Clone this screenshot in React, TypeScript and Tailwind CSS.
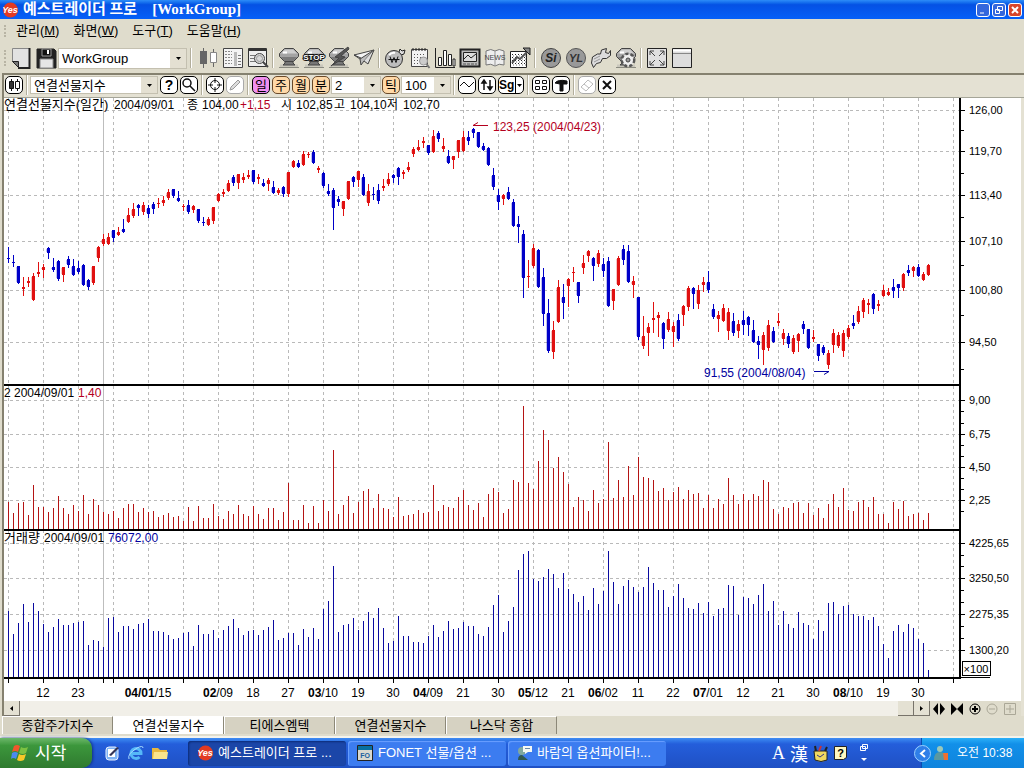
import React from "react";

// [up, high, body top, body bottom, low]
const candles = [
  [0, 247, 258, 259, 262], [0, 255, 262, 263, 266], [0, 266, 266, 283, 283], [1, 277, 287, 289, 295], [1, 277, 281, 283, 286],
  [1, 273, 276, 300, 300], [1, 262, 272, 274, 276], [1, 264, 267, 270, 277], [0, 247, 248, 253, 258], [0, 258, 267, 270, 271],
  [0, 260, 261, 279, 280], [1, 267, 267, 275, 281], [0, 256, 259, 265, 267], [0, 259, 266, 275, 275], [0, 261, 268, 272, 273],
  [0, 264, 265, 285, 285], [0, 279, 280, 287, 289], [1, 266, 266, 283, 284], [1, 246, 247, 258, 261], [1, 234, 239, 244, 245],
  [1, 233, 237, 244, 244], [0, 230, 230, 238, 241], [1, 227, 232, 235, 235], [0, 219, 229, 232, 232], [1, 208, 215, 222, 222],
  [1, 203, 209, 216, 217], [0, 204, 205, 208, 215], [1, 202, 205, 212, 214], [0, 205, 208, 214, 217], [0, 202, 204, 209, 213],
  [1, 198, 203, 204, 207], [1, 196, 200, 203, 205], [1, 189, 192, 198, 199], [0, 189, 189, 196, 197], [0, 191, 198, 201, 201],
  [1, 204, 206, 207, 210], [0, 200, 205, 212, 213], [1, 205, 206, 210, 212], [0, 209, 209, 221, 222], [0, 217, 222, 223, 225],
  [1, 217, 219, 225, 225], [1, 207, 207, 221, 223], [1, 193, 194, 201, 201], [1, 189, 192, 194, 196], [1, 180, 183, 191, 191],
  [0, 175, 177, 183, 185], [1, 174, 174, 183, 188], [1, 173, 177, 180, 182], [1, 170, 175, 177, 178], [0, 170, 170, 182, 183],
  [1, 174, 177, 179, 183], [0, 179, 183, 186, 186], [1, 178, 180, 184, 190], [0, 181, 187, 193, 193], [1, 188, 190, 193, 194],
  [0, 186, 187, 194, 196], [1, 172, 172, 194, 196], [1, 160, 161, 167, 167], [0, 160, 163, 167, 167], [1, 151, 154, 165, 165],
  [1, 152, 154, 155, 157], [0, 150, 152, 163, 163], [1, 166, 168, 170, 172], [0, 172, 173, 186, 187], [0, 184, 191, 194, 195],
  [0, 188, 190, 208, 229], [0, 196, 199, 202, 205], [1, 201, 201, 209, 215], [1, 181, 181, 199, 199], [0, 176, 177, 182, 186],
  [1, 171, 171, 180, 186], [0, 174, 177, 195, 195], [1, 184, 191, 203, 205], [0, 187, 194, 195, 199], [0, 184, 190, 201, 203],
  [1, 179, 186, 188, 190], [1, 173, 179, 184, 185], [0, 174, 175, 178, 182], [0, 167, 168, 177, 184], [1, 170, 172, 174, 178],
  [1, 162, 167, 170, 171], [1, 147, 149, 154, 156], [1, 140, 147, 150, 150], [1, 137, 141, 143, 147], [0, 145, 145, 153, 154],
  [1, 130, 136, 152, 152], [0, 131, 133, 139, 141], [1, 138, 146, 149, 151], [0, 150, 156, 163, 163], [1, 156, 156, 160, 168],
  [1, 140, 140, 152, 157], [1, 131, 137, 151, 151], [0, 131, 137, 141, 144], [0, 128, 129, 133, 137], [0, 132, 132, 147, 147],
  [0, 143, 146, 150, 150], [0, 147, 148, 165, 165], [0, 168, 175, 187, 189], [0, 189, 195, 202, 209], [1, 194, 195, 199, 204],
  [0, 187, 192, 199, 199], [0, 199, 202, 226, 226], [0, 216, 224, 227, 242], [0, 230, 234, 278, 297], [1, 260, 276, 277, 287],
  [1, 244, 248, 266, 267], [0, 249, 250, 287, 287], [0, 268, 277, 314, 325], [0, 299, 313, 351, 352], [1, 321, 330, 352, 358],
  [1, 280, 287, 322, 322], [0, 284, 297, 303, 318], [1, 278, 279, 286, 306], [1, 267, 272, 273, 281], [0, 282, 282, 296, 302],
  [1, 255, 263, 268, 273], [1, 250, 251, 256, 261], [0, 257, 258, 266, 280], [1, 250, 253, 264, 266], [0, 258, 264, 271, 276],
  [0, 257, 261, 306, 306], [1, 289, 289, 301, 309], [1, 256, 258, 285, 285], [0, 245, 249, 260, 264], [0, 245, 251, 282, 282],
  [1, 276, 281, 285, 297], [0, 297, 297, 337, 339], [1, 316, 336, 346, 348], [1, 323, 327, 333, 355], [1, 302, 318, 320, 332],
  [1, 312, 315, 318, 336], [0, 322, 323, 339, 348], [1, 312, 319, 330, 331], [1, 322, 326, 332, 346], [0, 314, 320, 339, 340],
  [1, 305, 306, 315, 325], [1, 286, 288, 307, 310], [0, 287, 288, 294, 308], [1, 285, 290, 304, 308], [1, 277, 282, 285, 291],
  [0, 271, 282, 290, 292], [0, 304, 309, 317, 318], [1, 311, 315, 319, 331], [1, 304, 308, 321, 321], [1, 308, 312, 331, 339],
  [0, 313, 321, 333, 335], [1, 320, 324, 331, 337], [0, 311, 320, 325, 334], [0, 316, 317, 325, 335], [0, 320, 330, 342, 342],
  [0, 336, 341, 345, 358], [1, 332, 335, 350, 364], [1, 320, 325, 348, 350], [0, 327, 331, 342, 342], [1, 313, 321, 323, 325],
  [1, 329, 333, 339, 344], [0, 333, 336, 344, 347], [1, 335, 338, 352, 353], [1, 333, 334, 341, 351], [0, 321, 324, 329, 333],
  [0, 329, 329, 348, 348], [1, 330, 337, 339, 341], [0, 344, 344, 356, 360], [0, 345, 347, 353, 354], [1, 350, 353, 365, 368],
  [1, 329, 333, 345, 352], [1, 332, 335, 346, 347], [1, 330, 333, 351, 356], [1, 325, 328, 337, 338], [0, 315, 323, 326, 328],
  [1, 306, 311, 322, 323], [1, 298, 300, 312, 317], [1, 299, 303, 305, 313], [0, 293, 294, 309, 313], [1, 300, 304, 306, 310],
  [1, 285, 290, 296, 296], [1, 288, 292, 295, 295], [0, 279, 287, 291, 297], [0, 284, 284, 288, 297], [1, 273, 274, 288, 290],
  [0, 265, 270, 273, 275], [1, 266, 267, 271, 276], [0, 264, 267, 276, 276], [1, 272, 274, 280, 280], [1, 264, 265, 275, 275],
];

const ranges = [
  28, 17, 27, 28, 15, 45, 23, 23, 18, 22, 34, 22, 16, 25, 19, 35, 16, 31, 25, 18, 16, 19, 12, 22, 26, 26, 18, 22, 18, 19,
  13, 15, 17, 13, 14, 9, 23, 9, 24, 12, 12, 26, 14, 11, 19, 16, 25, 16, 14, 24, 16, 11, 22, 22, 10, 18, 47, 10, 10, 25,
  7, 24, 7, 30, 19, 80, 16, 25, 34, 17, 28, 39, 41, 22, 36, 22, 21, 13, 33, 14, 15, 16, 20, 17, 18, 45, 19, 25, 23, 22,
  33, 40, 25, 20, 27, 13, 36, 42, 38, 17, 21, 50, 48, 124, 47, 41, 69, 100, 90, 62, 73, 58, 46, 23, 33, 30, 19, 40, 27, 31,
  88, 32, 50, 33, 64, 35, 73, 53, 52, 50, 39, 42, 30, 38, 43, 31, 40, 36, 37, 22, 35, 22, 31, 26, 52, 35, 26, 36, 30, 36,
  34, 50, 48, 21, 16, 23, 22, 27, 28, 17, 27, 15, 22, 12, 26, 36, 23, 42, 20, 19, 28, 30, 23, 33, 16, 16, 7, 28, 21, 29,
  14, 16, 17, 10, 17,
];

const volumes = [
  66, 43, 54, 73, 55, 74, 66, 53, 45, 50, 58, 52, 52, 54, 55, 56, 32, 37, 36, 30, 59, 60, 45, 51, 51, 48, 53, 54, 58, 46,
  46, 45, 42, 38, 39, 44, 45, 31, 52, 43, 43, 47, 39, 47, 51, 58, 49, 42, 46, 47, 42, 47, 50, 57, 37, 39, 44, 44, 32, 48,
  40, 49, 38, 68, 76, 111, 45, 52, 53, 59, 47, 56, 65, 59, 69, 49, 34, 36, 61, 41, 41, 35, 35, 34, 41, 52, 40, 46, 56, 48,
  49, 55, 51, 51, 43, 41, 50, 72, 82, 45, 56, 70, 107, 123, 126, 98, 96, 100, 108, 103, 89, 104, 88, 83, 75, 81, 67, 89, 73, 86,
  126, 95, 73, 91, 97, 90, 85, 90, 110, 94, 87, 87, 70, 81, 93, 79, 69, 68, 74, 64, 75, 61, 68, 69, 92, 91, 62, 80, 79, 73,
  82, 93, 66, 76, 52, 66, 53, 49, 65, 54, 52, 38, 57, 46, 74, 75, 63, 71, 72, 63, 61, 61, 57, 60, 51, 33, 19, 46, 52, 45,
  53, 49, 38, 34, 7,
];

const yLabels: [number, string][] = [
  [110, "126,00"], [151, "119,70"], [195, "113,40"], [241, "107,10"], [290, "100,80"], [342, "94,50"],
  [400, "9,00"], [434, "6,75"], [467, "4,50"], [500, "2,25"],
  [543, "4225,65"], [578, "3250,50"], [614, "2275,35"], [650, "1300,20"],
];
const minorTicks = [130, 173, 217, 265, 315, 369, 411, 423, 445, 456, 478, 489, 511, 555, 566, 590, 602, 626, 638];

// [bold month, rest], one per 35px column starting at the second one
const xLabels: [string, string][] = [
  ["", "12"], ["", "23"], ["", ""], ["04/01", "/15"], ["", ""], ["02", "/09"], ["", "18"], ["", "27"], ["03", "/10"],
  ["", "19"], ["", "30"], ["04", "/09"], ["", "21"], ["", "30"], ["05", "/12"], ["", "21"], ["06", "/02"], ["", "11"],
  ["", "22"], ["07", "/01"], ["", "12"], ["", "21"], ["", "30"], ["08", "/10"], ["", "19"], ["", "30"],
];
const columns = Array.from({ length: 28 }, (_, i) => 8 + i * 35);

function Chart() {
  return (
    <svg viewBox="4 98 1017 603" className="block w-full h-auto bg-white" role="img" aria-label="연결선물지수">
      <g shapeRendering="crispEdges">
        <g stroke="#b9b9b9" strokeDasharray="3 3">
          {columns.map((x) => (
            <line key={x} x1={x + 0.5} x2={x + 0.5} y1="98" y2="677" />
          ))}
          {yLabels.map(([y]) => (
            <line key={y} x1="4" x2="959" y1={y + 0.5} y2={y + 0.5} />
          ))}
        </g>
        <rect x="103" y="98" width="1" height="579" fill="#bdbdbd" />
        {candles.map(([up, high, top, bottom, low], i) => (
          <g key={i} fill={up ? "#e01010" : "#0000c8"}>
            <rect x={8 + i * 5} y={high} width="1" height={low - high + 1} />
            <rect x={7 + i * 5} y={top} width="3" height={bottom - top} />
            <rect x={6 + i * 5} y={top + 1} width="1" height={Math.max(bottom - top - 2, 0)} opacity="0.25" />
          </g>
        ))}
        {ranges.map((h, i) => (
          <rect key={i} x={8 + i * 5} y={530 - h} width="1" height={h} fill="#b41414" />
        ))}
        {volumes.map((h, i) => (
          <rect key={i} x={8 + i * 5} y={677 - h} width="1" height={h} fill="#0a0aa0" />
        ))}
        <rect x="4" y="384" width="956" height="2" />
        <rect x="4" y="529" width="956" height="2" />
        <rect x="4" y="677" width="957" height="2" />
        <rect x="959" y="98" width="2" height="581" />
        <rect x="961" y="677" width="29" height="1" />
        {yLabels.map(([y]) => (
          <rect key={y} x="961" y={y} width="4" height="1" />
        ))}
        {minorTicks.map((y) => (
          <rect key={y} x="961" y={y} width="3" height="1" />
        ))}
        {columns.map((x) => (
          <rect key={x} x={x} y="679" width="1" height="4" />
        ))}
        <rect x="103" y="679" width="1" height="4" />
        <rect x="962.5" y="661.5" width="28" height="14" fill="#fff" stroke="#000" />
      </g>
      <g fontSize="12">
        <text x="4" y="109" fontSize="13">연결선물지수(일간)</text>
        <text x="114" y="109">2004/09/01</text>
        <text x="187" y="109">종</text>
        <text x="202" y="109">104,00</text>
        <text x="240" y="109" fill="#b4001e">+1,15</text>
        <text x="281" y="109">시</text>
        <text x="296" y="109">102,85</text>
        <text x="334" y="109">고</text>
        <text x="350" y="109">104,10</text>
        <text x="387" y="109">저</text>
        <text x="403" y="109">102,70</text>
        <text x="4" y="397">2 2004/09/01</text>
        <text x="78" y="397" fill="#b4001e">1,40</text>
        <text x="4" y="542" fontSize="13">거래량</text>
        <text x="44" y="542">2004/09/01</text>
        <text x="108" y="542" fill="#0000a0">76072,00</text>
        <text x="493" y="131" fill="#b4001e">123,25 (2004/04/23)</text>
        <text x="704" y="377" fill="#0000a0">91,55 (2004/08/04)</text>
        <text x="976" y="673" fontSize="11" textAnchor="middle">×100</text>
      </g>
      <path d="M488 125.5H473M478 122.5L473 125.5" fill="none" stroke="#b4001e" />
      <path d="M814 371.5H829M829 371.5L824 374.5" fill="none" stroke="#0000a0" />
      <g>
        {yLabels.map(([y, label]) => (
          <text key={y} x="969" y={y + 4} fontSize="11">{label}</text>
        ))}
        {xLabels.map(([month, day], i) => (
          <text key={i} x={43 + i * 35} y="697" fontSize="12" textAnchor="middle">
            <tspan fontWeight="bold">{month}</tspan>{day}
          </text>
        ))}
      </g>
    </svg>
  );
}

function Combo({ label, value, className }: { label: string; value: string; className: string }) {
  return (
    <div className={"relative flex bg-white border border-[#c4c0b0] " + className}>
      <select aria-label={label} defaultValue={value} className="appearance-none bg-transparent w-full h-full pl-[3px] leading-none outline-none">
        <option>{value}</option>
      </select>
      <span className="pointer-events-none absolute right-0 inset-y-0 w-4 bg-[#e4e0d2] flex items-center justify-center">
        <svg width="5" height="3"><path d="M0 0h5L2.5 3z" /></svg>
      </span>
    </div>
  );
}

function Tool({ name, children }: { name: string; children: React.ReactNode }) {
  return (
    <button aria-label={name} title={name} className="w-[25px] h-6 flex items-center justify-center">
      <svg width="22" height="22" viewBox="0 0 22 22" fill="none" stroke="#222" className="overflow-visible">{children}</svg>
    </button>
  );
}

function Sep({ className = "mx-[2px]" }: { className?: string }) {
  return <span className={"w-[2px] h-5 border-l border-[#b2ae9c] border-r border-r-white " + className} />;
}

function Bell() {
  return (
    <>
      <path d="M2 17.500h18v3H2z" fill="#c9c7bc" stroke="none" />
      <path d="M1 20.500h20" stroke="#8a8a80" />
      <path d="M7 14h8v2l2 2H5l2-2z" fill="#777" stroke="#444" />
      <path d="M6.500 1.500h9l5 5v3l-5 5h-9l-5-5v-3z" fill="#a4a4a4" stroke="#444" />
      <path d="M7 2.500h8l4 4H3z" fill="#cfcfcf" stroke="none" />
      <path d="M3 10h16l-3.500 4h-9z" fill="#7a7a7a" stroke="none" />
      <path d="M5 5.500h4" stroke="#fff" strokeWidth="2" />
    </>
  );
}

function MainToolbar() {
  return (
    <div className="flex items-center h-[30px] pl-1">
      <span className="w-1 h-4 border-l-2 border-dotted border-[#b8b4a4]" />
      <Tool name="새 화면">
        <path d="M2.500 1.500h17v19h-11l-6-6z" fill="#e2e2e2" stroke="#888" />
        <path d="M19.500 1v20H8" stroke="#222" strokeWidth="2" />
        <path d="M2.500 14.500h6v6z" fill="#777" />
      </Tool>
      <Tool name="저장">
        <path d="M2 2h17l2 2v17H2z" fill="#222" />
        <path d="M7 2h9v7H7z" fill="#111" stroke="#999" />
        <path d="M13 3v4" stroke="#fff" strokeWidth="2" />
        <path d="M5 12h13v9H5z" fill="#e6e6e6" stroke="#888" />
      </Tool>
      <Combo label="작업그룹" value="WorkGroup" className="w-[129px] h-[21px] text-[13px]" />
      <Sep className="mx-[3px]" />
      <Tool name="차트">
        <path d="M6.500 1v20M16.500 2v18" stroke="#666" />
        <path d="M3 4h7v13H3z" fill="#666" stroke="none" />
        <path d="M13.500 5.500h6v10h-6z" fill="#fff" stroke="#888" />
      </Tool>
      <Tool name="현재가">
        <path d="M1.500 1.500h19v19h-19z" fill="#f4f4f4" stroke="#444" />
        <path d="M3 4.500h7M3 7.500h7M3 10.500h7M3 13.500h7M3 16.500h7" stroke="#888" strokeDasharray="2 1" />
        <path d="M12 5h3v14h-3z" fill="#bbb" stroke="none" />
        <path d="M16 8.500h3M16 11.500h3M16 14.500h3M16 17.500h3" stroke="#777" />
      </Tool>
      <Tool name="종목검색">
        <path d="M1.500 1.500h18v18h-18z" fill="#eee" stroke="#333" />
        <path d="M1 3h19" stroke="#333" strokeWidth="2" />
        <path d="M3 8.500h5M3 11.500h4M3 14.500h5" stroke="#777" />
        <circle cx="12.500" cy="11.500" r="5" fill="#d8d8d8" stroke="#444" />
        <circle cx="12.500" cy="11.500" r="3" stroke="#999" />
        <path d="M16 15l5 5" stroke="#444" strokeWidth="2" />
      </Tool>
      <Sep />
      <Tool name="알람"><Bell /></Tool>
      <Tool name="정지">
        <Bell />
        <text x="11" y="13" textAnchor="middle" fontSize="8" fontWeight="bold" fill="#fff" stroke="#111" strokeWidth="2" paintOrder="stroke">STOP</text>
      </Tool>
      <Tool name="알람 해제">
        <Bell />
        <path d="M20 0L7 10l4 1-8 8 14-9-4-1 8-7z" fill="#555" stroke="#444" />
      </Tool>
      <Tool name="주문">
        <path d="M1 8l20-5-10 11-3-3z" fill="#f4f4f4" stroke="#444" />
        <path d="M21 3L7 12l1 6 3-4z" fill="#bbb" stroke="#444" />
        <path d="M1 8l6 4" stroke="#444" />
        <path d="M11 14l4 3 6-14" fill="#ddd" stroke="#444" />
      </Tool>
      <Sep />
      <Tool name="계좌">
        <path d="M15 5l1-3 2 2 3-1-1 4-3 1" fill="#ddd" />
        <circle cx="10" cy="12" r="8.500" fill="#bdbdbd" stroke="#333" />
        <path d="M5 8q3-3 6-2" stroke="#fff" strokeWidth="2" />
        <path d="M6 9.500l2 6 2-5 2 5 2-6M4.500 12.500h11" stroke="#111" />
      </Tool>
      <Tool name="달력">
        <path d="M2.500 2.500h16v17h-16z" fill="#f2f2f2" stroke="#444" />
        <path d="M4 1v3M7 1v3M10 1v3M13 1v3M16 1v3" />
        <path d="M5 7.500h12M5 10.500h12M5 13.500h7M5 16.500h7" stroke="#555" strokeDasharray="1 2" strokeWidth="1" />
        <circle cx="14.500" cy="14" r="4" fill="#ccc" stroke="#999" />
        <path d="M17.500 17l3 4" stroke="#777" strokeWidth="2" />
      </Tool>
      <Tool name="막대차트">
        <path d="M1.500 1v19.500H21" />
        <path d="M4.500 10.500h3v8h-3zM9.500 3.500h3v15h-3zM14.500 7.500h3v11h-3zM19 12v7h2v-7z" fill="#fff" />
      </Tool>
      <Tool name="모니터">
        <path d="M1.500 2.500h19v17h-19z" fill="#bbb" strokeWidth="2" />
        <path d="M4.500 5.500h13v9h-13z" fill="#ddd" />
        <path d="M5 12l4-4 3 3 5-4" />
        <path d="M4 17h14" stroke="#555" strokeDasharray="3 1" />
      </Tool>
      <Tool name="뉴스">
        <path d="M2 4q5-3 9 0 4-3 9 0v14q-5-2-9 1-4-3-9-1z" fill="#eee" stroke="#777" />
        <path d="M11 4v15" stroke="#999" />
        <text x="11" y="13" textAnchor="middle" fontSize="7" fill="#444" stroke="none">NEWS</text>
      </Tool>
      <Tool name="추세">
        <path d="M1.500 4.500h16v16h-16z" fill="#fff" />
        <path d="M3 7.500h14M3 10.500h14M3 13.500h14M3 16.500h14" strokeDasharray="1 2" />
        <path d="M4 9h13M4 12h13M4 15h13M4 18h13" stroke="#777" strokeDasharray="1 2" />
        <path d="M3 16l5-6 3 2 8-8" stroke="#555" strokeWidth="2" />
        <path d="M14 1h7v7z" fill="#888" />
      </Tool>
      <Sep />
      <Tool name="시뮬레이션">
        <circle cx="11" cy="11" r="9.500" fill="#999" stroke="#444" />
        <text x="11" y="15" textAnchor="middle" fontSize="12" fontWeight="bold" fontStyle="italic" fill="#222" stroke="none">Si</text>
      </Tool>
      <Tool name="예스랭귀지">
        <circle cx="11" cy="11" r="9.500" fill="#999" stroke="#555" />
        <text x="11" y="15" textAnchor="middle" fontSize="11" fontWeight="bold" fontStyle="italic" fill="#333" stroke="none">YL</text>
      </Tool>
      <Tool name="도구">
        <path d="M1.500 16l1-6 5-3 3 0 1-4 5-1.500-1 4 3 1 2-3 0 5-4 3-4 0-2 4-4 1-3 4z" fill="#dcdcdc" stroke="#333" />
        <path d="M4 12l6-3M4 15l6-3" stroke="#999" />
      </Tool>
      <Tool name="설정">
        <Bell />
        <circle cx="13" cy="13" r="6" fill="#eee" stroke="#555" strokeDasharray="3 2" strokeWidth="3" />
        <circle cx="13" cy="13" r="5" fill="#eee" stroke="none" />
        <circle cx="13" cy="13" r="2" fill="#999" stroke="#444" />
      </Tool>
      <Sep />
      <Tool name="전체화면">
        <path d="M1.500 1.500h19v19h-19z" fill="#e0e0e0" />
        <path d="M4 8V4h4M4 4l5 5M14 4h4v4M18 4l-5 5M4 14v4h4M4 18l5-5M18 14v4h-4M18 18l-5-5" stroke="#444" />
      </Tool>
      <Tool name="창">
        <path d="M1.500 1.500h19v19h-19z" fill="#ddd" />
        <path d="M2 3.500h18" stroke="#fff" strokeWidth="2" />
        <path d="M2 6.500h18" stroke="#888" />
      </Tool>
    </div>
  );
}

function Key({ name, tone = "bg-white border-black", children }: { name: string; tone?: string; children: React.ReactNode }) {
  return (
    <button aria-label={name} title={name} className={"w-[18px] h-[18px] mx-px shrink-0 rounded-[5px] border flex items-center justify-center text-[13px] leading-none " + tone}>
      {children}
    </button>
  );
}

function Glyph({ d, stroke = "#111", fill = "none", width = 1 }: { d: string; stroke?: string; fill?: string; width?: number }) {
  return (
    <svg width="14" height="14" viewBox="0 0 14 14" fill={fill} stroke={stroke} strokeWidth={width} className="shrink-0">
      <path d={d} />
    </svg>
  );
}

function ChartToolbar() {
  return (
    <div className="flex items-center h-[22px] pb-[2px]">
      <Key name="차트 종류">
        <svg width="14" height="14" viewBox="0 0 14 14" stroke="#111" className="shrink-0">
          <path d="M4.500 1v12M10.500 1v12" />
          <path d="M2.500 3.500h4v7h-4z" fill="#333" />
          <path d="M8.500 3.500h4v7h-4z" fill="#fff" />
        </svg>
      </Key>
      <Sep />
      <Combo label="종목" value="연결선물지수" className="w-[128px] h-[18px] text-[13px]" />
      <span className="w-px" />
      <Key name="도움말"><b className="text-[14px]">?</b></Key>
      <Key name="검색"><Glyph d="M9 5a4 4 0 1 1-8 0 4 4 0 1 1 8 0M8 8l5 5" width={1.5} /></Key>
      <Sep />
      <Key name="십자선"><Glyph d="M11.500 7a4.500 4.500 0 1 1-9 0 4.500 4.500 0 1 1 9 0M7 0v5M7 9v5M0 7h5M9 7h5" /></Key>
      <Key name="그리기" tone="bg-white border-[#aaa]"><Glyph d="M2 12l1-3 7-7 2 2-7 7z" stroke="#999" fill="#ddd" /></Key>
      <Sep />
      <Key name="일" tone="bg-[#f090f0] border-black">일</Key>
      <Key name="주" tone="bg-[#ffd9a8] border-[#6a4a2a]">주</Key>
      <Key name="월" tone="bg-[#ffd9a8] border-[#6a4a2a]">월</Key>
      <Key name="분" tone="bg-[#ffd9a8] border-[#6a4a2a]">분</Key>
      <Combo label="분 단위" value="2" className="w-[50px] h-[18px] text-[13px]" />
      <Key name="틱" tone="bg-[#ffd9a8] border-[#6a4a2a]">틱</Key>
      <Combo label="틱 단위" value="100" className="w-[50px] h-[18px] text-[13px]" />
      <Sep />
      <Key name="지표"><Glyph d="M0 8l4-4 5 5 5-5" /></Key>
      <Key name="정렬"><Glyph d="M4 12V4M10 2v8M2 5l2-3 2 3zM8 9l2 3 2-3z" fill="#111" width={1.5} /></Key>
      <button aria-label="신호" className="flex h-[18px] w-[26px] mx-px rounded-[5px] border border-black bg-white items-center text-[12px] font-bold leading-none">
        <span>Sg</span>
        <span className="ml-px h-full border-l border-black flex items-center pl-px">
          <svg width="5" height="3"><path d="M0 0h5L2.500 3z" /></svg>
        </span>
      </button>
      <Sep />
      <Key name="분할"><Glyph d="M1.500 2.500h4v3h-4zM8.500 2.500h4v3h-4zM1.500 8.500h4v3h-4zM8.500 8.500h4v3h-4z" /></Key>
      <Key name="도구"><Glyph d="M1 5q3-4 12-2v3H9v7H6V6z" fill="#111" /></Key>
      <Sep />
      <Key name="지우기" tone="bg-white border-[#aaa]"><Glyph d="M8 2l5 4-7 7-5-4zM4 6l5 4" stroke="#bbb" /></Key>
      <Key name="닫기"><Glyph d="M3 3l8 8M11 3l-8 8" width={2} /></Key>
    </div>
  );
}

function YesLogo() {
  return (
    <svg width="17" height="16" viewBox="0 0 17 16" className="shrink-0">
      <circle cx="8.500" cy="8" r="7.500" fill="#e23a22" />
      <text x="8" y="11" textAnchor="middle" fontSize="9" fontWeight="bold" fontStyle="italic" fill="#fff">Yes</text>
    </svg>
  );
}

function WinButton({ name, red, d }: { name: string; red?: boolean; d: string }) {
  return (
    <button aria-label={name} className={"w-[14px] h-[14px] rounded-[3px] border border-white flex items-center justify-center " + (red ? "bg-[#d8452a]" : "bg-[#3467dc]")}>
      <svg width="10" height="10" fill="none" stroke="#fff" strokeWidth={red ? 2 : 1}><path d={d} /></svg>
    </button>
  );
}

const tabs = ["종합주가지수", "연결선물지수", "티에스엠텍", "연결선물지수", "나스닥 종합"];

function Taskbar() {
  return (
    <footer className="flex h-[30px] items-stretch text-white bg-linear-to-b from-[#3f8cf3] via-[#245edb] via-20% to-[#1f50c4]">
      <button className="w-[92px] rounded-r-[10px] flex items-center pl-[11px] gap-[5px] text-[17px] leading-none bg-linear-to-b from-[#6cb86a] via-[#3c973c] via-25% to-[#2f7a2f] shadow-[1px_0_3px_#103080]">
        <svg width="19" height="18" viewBox="0 0 19 18">
          <path d="M3 2q3-2 6 0L7 8Q4 6 1 8z" fill="#f0562c" />
          <path d="M10 3q3 2 7 0l-2 6q-3 2-7 0z" fill="#7cc142" />
          <path d="M1 9q3-2 6 0l-2 6q-3-2-5 0z" fill="#4a8af0" />
          <path d="M8 10q3 2 7 0l-2 6q-4 2-7 0z" fill="#f8c828" />
        </svg>
        시작
      </button>
      <div className="flex items-center gap-2 pl-3 w-24">
        <button aria-label="바탕 화면 보기">
          <svg width="16" height="16" viewBox="0 0 16 16">
            <rect x="2" y="2" width="12" height="13" rx="3" fill="#7fb4f4" stroke="#e8f0ff" />
            <path d="M4 4h7v8H4z" fill="#fff" />
            <path d="M5 10l8-8 2 1-8 8z" fill="#335" />
          </svg>
        </button>
        <button aria-label="Internet Explorer">
          <svg width="16" height="16" viewBox="0 0 16 16" fill="none">
            <path d="M3 8.500h10A5 5 0 1 0 11.500 12" stroke="#55b8f8" strokeWidth="3" />
            <path d="M1 14Q-1 9 9 3q6-3 6 0" stroke="#a8dcff" />
          </svg>
        </button>
        <button aria-label="폴더">
          <svg width="16" height="14" viewBox="0 0 16 14">
            <path d="M0 2h6l2 2h7v9H0z" fill="#e8b840" />
            <path d="M2 6h14l-1 7H1z" fill="#fbe48c" />
          </svg>
        </button>
      </div>
      <div className="flex items-center gap-[2px] text-[13px] flex-1">
        <button className="w-[158px] h-[25px] rounded-[3px] bg-[#1b46a8] flex items-center gap-1 pl-[9px] shadow-[inset_1px_1px_2px_#0c2c78]">
          <YesLogo />예스트레이더 프로 ...
        </button>
        <button className="w-[158px] h-[25px] rounded-[3px] bg-[#3c7cf0] flex items-center gap-1 pl-[9px] shadow-[inset_1px_1px_1px_#6ba0ff]">
          <svg width="17" height="16" viewBox="0 0 17 16">
            <path d="M.5.500h15v15H.5z" fill="#d8d8d0" stroke="#222" />
            <path d="M1 1h14v4H1z" fill="#0870a0" />
            <text x="8" y="13" textAnchor="middle" fontSize="7" fontWeight="bold" fill="#2060a0">FO</text>
          </svg>
          FONET 선물/옵션 ...
        </button>
        <button className="w-[158px] h-[25px] rounded-[3px] bg-[#3c7cf0] flex items-center gap-1 pl-[9px] shadow-[inset_1px_1px_1px_#6ba0ff]">
          <svg width="16" height="16" viewBox="0 0 16 16">
            <circle cx="5" cy="6" r="4" fill="#7fa8a0" />
            <path d="M1 15q0-5 4-5l6 5z" fill="#305850" />
            <path d="M6 1h9v6h-4l-3 2V7H6z" fill="#f4f8f4" />
            <path d="M8 3.500h5" stroke="#68a" />
          </svg>
          바람의 옵션파이터!...
        </button>
      </div>
      <div className="flex items-center gap-[5px] pr-[52px]">
        <span className="text-[18px] font-['Liberation_Serif',serif]">A</span>
        <span className="text-[18px] leading-none font-['Noto_Sans_CJK_KR',sans-serif]">漢</span>
        <svg width="16" height="17" viewBox="0 0 16 17">
          <path d="M1 6h13v9q-6 3-12 0z" fill="#f0d860" stroke="#222" />
          <path d="M3 6L2 1M12 6l2-4" stroke="#222" strokeWidth="2" />
          <path d="M6 6l2-5" stroke="#c33" strokeWidth="2" />
          <path d="M4 10l3 2 4-3" stroke="#338" fill="none" />
        </svg>
        <svg width="14" height="14" viewBox="0 0 14 14">
          <path d="M.5.500h12v11l-3 2h-9z" fill="#fff8c0" stroke="#222" />
          <text x="6.500" y="11" textAnchor="middle" fontSize="11" fontWeight="bold">?</text>
        </svg>
        <span className="w-px" />
        <svg width="10" height="18" viewBox="0 0 10 18" fill="none" stroke="#fff">
          <path d="M3.500.500h5v4h-5zM1.500 2.500h5v4h-5z" />
          <path d="M2 14h6l-3 3z" fill="#fff" stroke="none" />
        </svg>
      </div>
      <div className="relative flex items-center w-[103px] pl-[11px] gap-2 text-[12px] border-l border-[#0a4cb0] bg-linear-to-b from-[#2ab0f8] via-[#1290e9] via-20% to-[#0f84dd]">
        <button aria-label="숨겨진 아이콘 표시" className="absolute -left-2 w-[17px] h-[17px] rounded-full border border-[#9cd0ff] bg-[#2f7fe8] flex items-center justify-center">
          <svg width="7" height="9" fill="none" stroke="#fff" strokeWidth="2"><path d="M6 1L2 4.500 6 8" /></svg>
        </button>
        <svg width="16" height="16" viewBox="0 0 16 16">
          <circle cx="7" cy="4" r="3" fill="#9cc8b8" />
          <path d="M1 15q0-8 6-8t6 8z" fill="#5a98a0" />
          <path d="M10 8h5v7h-4z" fill="#f07030" />
        </svg>
        오전 10:38
      </div>
    </footer>
  );
}

export default function App() {
  return (
    <div className="w-full bg-[#dfdccc] text-black font-['Liberation_Sans','Noto_Sans_CJK_KR',sans-serif]">
      <header className="flex items-center h-[19px] pl-[2px] pr-[2px] bg-linear-to-b from-[#2d8cf8] via-[#0551e4] via-25% to-[#0560f8]">
        <YesLogo />
        <h1 className="pl-1 flex-1 text-white font-bold text-[15px] leading-none whitespace-pre font-['Liberation_Serif','Noto_Sans_CJK_KR',serif]">
          예스트레이더 프로{"    "}[WorkGroup]
        </h1>
        <div className="flex gap-[2px]">
          <WinButton name="최소화" d="M2 8h4" />
          <WinButton name="이전 크기로" d="M3.500 1.500h5v4h-5zM1.500 4.500h4v4h-4z" />
          <WinButton name="닫기" red d="M2 2l6 6M8 2l-6 6" />
        </div>
      </header>
      <nav className="flex items-center h-6 pl-1 text-[13px]">
        <span className="w-[5px] h-3 border-l-2 border-dotted border-[#b8b4a4]" />
        <button className="px-[7px]">관리(<u>M</u>)</button>
        <button className="px-[7px]">화면(<u>W</u>)</button>
        <button className="px-[7px]">도구(<u>T</u>)</button>
        <button className="px-[7px]">도움말(<u>H</u>)</button>
      </nav>
      <MainToolbar />
      <div className="flex">
        <div className="w-[2px]" />
        <main className="flex-1 border-t-2 border-l-2 border-[#85816f] bg-[#e4e1d3]">
          <div className="border-b border-[#a5a598]">
            <ChartToolbar />
          </div>
          <div className="pr-[3px]">
            <Chart />
            <div className="flex h-[15px] items-stretch bg-[#dfdccc]">
              <button aria-label="왼쪽으로" className="w-4 bg-[#e4e1d3] border-r border-b border-[#77736a] flex items-center justify-center">
                <svg width="3" height="5"><path d="M3 0v5L0 2.500z" /></svg>
              </button>
              <div className="flex-1 flex justify-end bg-[#f1efe8]">
                <div className="w-4 bg-[#e4e1d3] border-r border-b border-[#77736a]" />
              </div>
              <button aria-label="오른쪽으로" className="w-4 bg-[#e4e1d3] border-r border-b border-[#77736a] flex items-center justify-center">
                <svg width="3" height="5"><path d="M0 0v5l3-2.500z" /></svg>
              </button>
              <div className="flex items-center justify-between w-[91px] pl-[3px] pr-[5px]">
                <button aria-label="간격 넓게"><svg width="12" height="12"><path d="M5 0v12L0 6zM7 0v12l5-6z" /></svg></button>
                <button aria-label="간격 좁게"><svg width="12" height="12"><path d="M0 0v12l6-6zM12 0v12L6 6z" /></svg></button>
                <button aria-label="확대"><svg width="12" height="12" fill="none" stroke="#000"><circle cx="6" cy="6" r="5" /><path d="M6 3v6M3 6h6" strokeWidth="2" /></svg></button>
                <button aria-label="축소"><svg width="12" height="12" fill="none" stroke="#aaa797"><circle cx="6" cy="6" r="5" /><path d="M3 6h6" /></svg></button>
                <button aria-label="전체 보기"><svg width="12" height="12" fill="none" stroke="#aaa797"><path d="M.5.500h11v11H.5zM6 2v8M2 6h8" /></svg></button>
              </div>
            </div>
          </div>
        </main>
      </div>
      <div className="flex h-[22px] pl-[2px] pb-[2px] border-b-2 border-[#f4f3ec] text-[13px]">
        {tabs.map((tab, i) => (
          <button
            key={i}
            className={"w-[111px] border-t border-t-white border-r border-r-[#8c8878] border-l border-l-white leading-none " + (i === 1 ? "bg-white" : "bg-[#d6d2c2]")}
          >
            {tab}
          </button>
        ))}
      </div>
      <Taskbar />
    </div>
  );
}
